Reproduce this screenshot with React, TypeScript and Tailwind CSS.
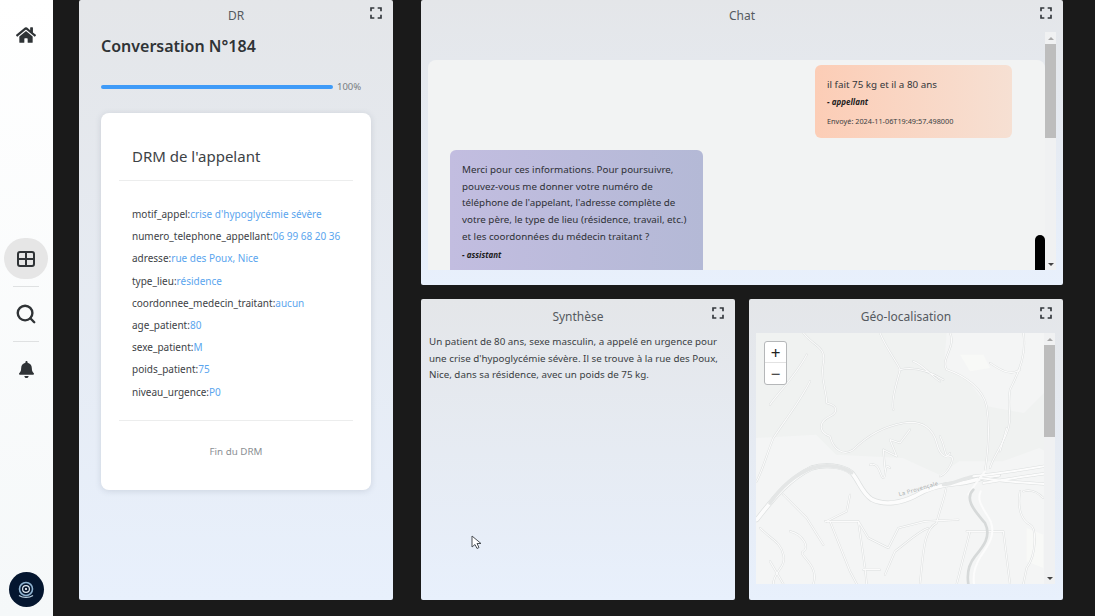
import React from 'react';
import { FaHome, FaBell } from 'react-icons/fa';
import { MdFullscreen } from 'react-icons/md';
import { Search } from 'lucide-react';

const drm = [
  { key: 'motif_appel', value: "crise d'hypoglycémie sévère" },
  { key: 'numero_telephone_appellant', value: '06 99 68 20 36' },
  { key: 'adresse', value: 'rue des Poux, Nice' },
  { key: 'type_lieu', value: 'résidence' },
  { key: 'coordonnee_medecin_traitant', value: 'aucun' },
  { key: 'age_patient', value: '80' },
  { key: 'sexe_patient', value: 'M' },
  { key: 'poids_patient', value: '75' },
  { key: 'niveau_urgence', value: 'P0' },
];

// small map roads, drawn twice: grey casing then white fill
const minorRoads = [
  'M190 115c30 40 70 40 60 90s10 80 10 120c40 10 30 30 10 40-40 20-30 50 0 60 10 40 40 60 70 40 40-40 90-70 150-80 60-10 90 20 100 60s30 50 40 30',
  'M420 115c20 50 60 100 60 110s-30 90-20 120',
  'M630 115c20 40-30 80-10 110 60 20 110 60 120 110 10 60 5 130-5 195',
  'M850 115c10 60-10 110-40 170-10 60 10 80-10 130s-40 70-50 105',
  'M200 180c-30 60-90 120-110 150M210 260c-30 60-70 110-110 170-20 50-30 90-50 130',
  'M520 200c30 10 60 50 80 60M750 205c30 20 60 40 90 20M480 225c40-10 80 0 130 30',
  'M510 405l-30 40-30-10 20 50-40-20 5 60M600 425c20 40 10 60 30 60s-5 50-30 60',
  'M390 510c30-10 30 40 40 40s0-50 20-30M850 590c30-10 50 10 60 20M840 590c-10 60 10 90 30 100s20 90-10 130l-10 48',
  'M60 700c40 40 60 40 70 80s-30 50-30 88M150 710c40 10 60 50 40 60s50 40 30 98',
  'M255 680h100l30 50 60 30 30-60 80-20 100-5M270 680l60 150 20 38M355 680l20 140 5 48M370 825h50',
  'M590 685c-40 20-40 90-50 183M680 710h110l20 158M650 868l40-158M435 840l30-70c40-30 70-60 100-70M620 570c-5 40-20 70-30 115',
  'M130 600l70 70 50 80M330 600l-10 50-60 30M800 400l-20 70M90 800l40 68',
];

function Panel({ title, className, head = 'h-[32px] pt-[7px]', icon = 'top-[3px]', children }: { title: string; className: string; head?: string; icon?: string; children?: React.ReactNode }) {
  return (
    <section className={`relative flex flex-col overflow-hidden rounded-[2px] bg-gradient-to-b from-[#e4e6e9] to-[#e8f0fc] ${className}`}>
      <div className={`shrink-0 text-center text-[12px] leading-[17px] text-[#555a60] ${head}`}>{title}</div>
      <MdFullscreen className={`absolute right-[7px] text-[#33383d] ${icon}`} size={20} />
      {children}
    </section>
  );
}

function Scrollbar({ thumb }: { thumb: string }) {
  return (
    <div className="flex w-[11px] shrink-0 flex-col items-center bg-[#f0f1f2]">
      <div className="flex h-[12px] items-center justify-center">
        <div className="h-0 w-0 border-x-[3px] border-b-[3px] border-x-transparent border-b-[#a8a8a8]" />
      </div>
      <div className={`w-full bg-[#bdbdbd] ${thumb}`} />
      <div className="flex-1" />
      <div className="flex h-[12px] items-center justify-center">
        <div className="h-0 w-0 border-x-[3px] border-t-[3px] border-x-transparent border-t-[#444444]" />
      </div>
    </div>
  );
}

function GridIcon() {
  return (
    <svg width="18" height="16" viewBox="0 0 18 16" fill="none" stroke="#2f3336" strokeWidth="2">
      <rect x="1" y="1" width="16" height="14" rx="2" />
      <path d="M9 1v14M1 8h16" />
    </svg>
  );
}

function Logo() {
  return (
    <div className="flex h-[35px] w-[35px] items-center justify-center rounded-full bg-[#04162f]">
      <svg width="20" height="20" viewBox="0 0 20 20" fill="none">
        <circle cx="10" cy="9" r="6.5" stroke="#8fb4d2" strokeWidth="1.6" />
        <circle cx="10" cy="9" r="3.4" stroke="#dfe9f2" strokeWidth="1.2" />
        <circle cx="10" cy="9" r="1.1" fill="#ffffff" />
        <path d="M3 15.5c4 2.6 10 2.6 14 0" stroke="#b9cfe0" strokeWidth="1.3" />
      </svg>
    </div>
  );
}

function Sidebar() {
  return (
    <aside className="flex h-full w-[53px] shrink-0 flex-col items-center bg-gradient-to-b from-[#ffffff] to-[#f5f8f9] pt-[25px] pr-[1px] pb-[9px]">
      <FaHome size={20} className="text-[#2f3336]" />
      <div className="mt-[193px] flex h-[41px] w-[44px] items-center justify-center rounded-full bg-[#e6e6e6]">
        <GridIcon />
      </div>
      <div className="mt-[7px] h-px w-[26px] bg-[#dfe1e2]" />
      <Search size={22} strokeWidth={2.6} className="mt-[16px] text-[#2f3336]" />
      <div className="mt-[16px] h-px w-[26px] bg-[#dfe1e2]" />
      <FaBell size={17} className="mt-[19px] text-[#2f3336]" />
      <div className="mt-auto">
        <Logo />
      </div>
    </aside>
  );
}

function DrPanel() {
  return (
    <Panel title="DR" className="h-[600px] w-[314px] shrink-0">
      <div className="px-[22px]">
        <h1 className="text-[16px] leading-[28px] font-semibold text-[#2f3336]">Conversation N°184</h1>
        <div className="mt-[20px] flex items-center">
          <div className="h-[4px] w-[232px] rounded-full bg-[#3f9bf8]" />
          <span className="ml-[4px] text-[9.5px] leading-[14px] text-[#777c80]">100%</span>
        </div>
        <div className="mt-[19px] h-[377px] w-[270px] rounded-[8px] bg-white pt-[31px] shadow-[0_1px_6px_rgba(80,90,110,0.18)]">
          <div className="mx-[18px] border-b border-[#eceded] px-[13px] pb-[12px] text-[15px] leading-[24px] text-[#3d4246]">
            DRM de l'appelant
          </div>
          <div className="mx-[18px] flex flex-col border-b border-[#eceded] px-[13px] pt-[22px] pb-[17px]">
            {drm.map((row) => (
              <div key={row.key} className="h-[22.2px] text-[10px] leading-[22px] whitespace-nowrap text-[#3d4246]">
                {row.key}:<span className="text-[#5aa5ee]">{row.value}</span>
              </div>
            ))}
          </div>
          <div className="pt-[23px] text-center text-[9.8px] leading-[16px] text-[#8b8f93]">Fin du DRM</div>
        </div>
      </div>
    </Panel>
  );
}

function ChatPanel() {
  return (
    <Panel title="Chat" className="h-[285px] w-[642px]">
      <div className="ml-[7px] flex h-[238px] w-[628px]">
        <div className="relative flex-1 overflow-hidden pt-[28px]">
          <div className="h-full rounded-t-[8px] bg-[#f2f3f3] pt-[5px]">
            <div className="ml-[387px] h-[73px] w-[197px] rounded-[6px] bg-gradient-to-r from-[#fccdb6] to-[#f6e0d3] px-[12px] pt-[12px]">
              <p className="text-[9.8px] leading-[16px] text-[#33363a]">il fait 75 kg et il a 80 ans</p>
              <p className="mt-[3px] text-[8px] leading-[12px] font-bold text-[#1d1d1d] italic">- appellant</p>
              <p className="mt-[7px] text-[7.3px] leading-[12px] text-[#3b3e42]">Envoyé: 2024-11-06T19:49:57.498000</p>
            </div>
            <div className="mt-[12px] ml-[22px] h-[140px] w-[253px] rounded-[6px] bg-gradient-to-r from-[#c2bde0] to-[#b4b9d6] px-[12px] pt-[12px]">
              <p className="text-[9.8px] leading-[16.7px] text-[#2e3036]">
                Merci pour ces informations. Pour poursuivre, pouvez-vous me donner votre numéro de téléphone de l'appelant, l'adresse complète de votre père, le type de lieu (résidence, travail, etc.) et les coordonnées du médecin traitant ?
              </p>
              <p className="mt-[3px] text-[8px] leading-[12px] font-bold text-[#1d1d1d] italic">- assistant</p>
            </div>
          </div>
          <div className="absolute right-0 bottom-0 h-[35px] w-[10px] rounded-t-full bg-black" />
        </div>
        <Scrollbar thumb="h-[94px]" />
      </div>
    </Panel>
  );
}

function SyntheseCursor() {
  return (
    <svg className="absolute left-[50px] top-[236px]" width="11" height="15" viewBox="0 0 11 15" fill="#ffffff" stroke="#4a4f55" strokeWidth="1">
      <path d="M1 1v11l3-2.5 2 4 2-1-2-4h4z" />
    </svg>
  );
}

function MapArt() {
  return (
    <svg className="h-full w-full" viewBox="48 115 864 753" preserveAspectRatio="none" fill="none" strokeLinecap="round" strokeLinejoin="round">
      <rect x="48" y="115" width="864" height="753" fill="#f0f2f1" />
      <path d="M620 115h292v180l-60 60-110-20-60-80-70-40zM48 430l180-10 60 60 200 10 110 50 60-40 130 0 110-40 74 40v408H48z" fill="#f4f5f5" />
      <path d="M860 700l50 20v100l-50-20zM660 180h70l20 40-60 10z" fill="#f8f9f7" />
      <g stroke="#dadddd" strokeWidth="6">
        {minorRoads.map((d) => <path key={d} d={d} />)}
      </g>
      <g stroke="#fbfbfb" strokeWidth="3.5">
        {minorRoads.map((d) => <path key={d} d={d} />)}
      </g>
      <path d="M50 675c40-50 90-120 165-155 40-12 90-8 120 14 25 30 30 60 60 80 40 20 90 10 130-10 40-25 90-35 130-38 40-2 70-20 120-25" stroke="#dcdfdf" strokeWidth="15" />
      <path d="M50 675c40-50 90-120 165-155 40-12 90-8 120 14 25 30 30 60 60 80 40 20 90 10 130-10 40-25 90-35 130-38 40-2 70-20 120-25" stroke="#fcfcfc" strokeWidth="11" />
      <path d="M90 625c35-50 75-85 125-105 40-12 90-8 120 14" stroke="#e4e6e6" strokeWidth="11" />
      <path d="M610 570c30-2 60-20 90-25" stroke="#e4e6e6" strokeWidth="10" />
      <path d="M700 545c70-8 140-18 212-30M730 565c60-10 120-20 182-28M720 550c70 10 130 15 192 18" stroke="#dcdfdf" strokeWidth="9" />
      <path d="M700 545c70-8 140-18 212-30M730 565c60-10 120-20 182-28M720 550c70 10 130 15 192 18" stroke="#fcfcfc" strokeWidth="6" />
      <path d="M735 530l-30 40-20 30" stroke="#fbfbfb" strokeWidth="6" />
      <path d="M700 585c-30 30 10 70 35 100 20 40-5 70-30 100-20 25-25 50-20 83" stroke="#d6d9d9" strokeWidth="8" />
      <path d="M722 590c-15 30 15 60 30 90 15 40-5 70-30 105-15 25-25 50-20 83" stroke="#fcfcfc" strokeWidth="6" />
      <text x="478" y="605" transform="rotate(-16 478 605)" fontFamily="'Noto Sans', sans-serif" fontSize="17" letterSpacing="1" fill="#a9adad">La Provençale</text>
    </svg>
  );
}

function GeoPanel() {
  return (
    <Panel title="Géo-localisation" className="h-full w-[314px]" head="h-[34px] pt-[9px]" icon="top-[4px]">
      <div className="ml-[7px] flex h-[251px] w-[299px]">
        <div className="relative w-[288px] overflow-hidden">
          <MapArt />
          <div className="absolute left-[8px] top-[8px] w-[23px] overflow-hidden rounded-[3px] border border-[#b5b7b9] bg-white">
            <div className="flex h-[21px] items-center justify-center border-b border-[#e2e2e2] text-[17px] leading-none text-[#222222]">+</div>
            <div className="flex h-[21px] items-center justify-center text-[17px] leading-none text-[#222222]">−</div>
          </div>
        </div>
        <Scrollbar thumb="h-[92px]" />
      </div>
    </Panel>
  );
}

export default function App() {
  return (
    <div className="flex h-[616px] w-[1095px] overflow-hidden bg-[#1a1a1a] font-['Noto_Sans',sans-serif]">
      <Sidebar />
      <main className="ml-[26px] flex gap-[28px]">
        <DrPanel />
        <div className="flex h-[600px] w-[642px] flex-col gap-[14px]">
          <ChatPanel />
          <div className="flex min-h-0 flex-1 gap-[14px]">
            <Panel title="Synthèse" className="h-full w-[314px]" head="h-[34px] pt-[9px]" icon="top-[4px]">
              <p className="px-[8px] pt-[1px] text-[9.8px] leading-[16.7px] text-[#3a3e43]">
                Un patient de 80 ans, sexe masculin, a appelé en urgence pour une crise d'hypoglycémie sévère. Il se trouve à la rue des Poux, Nice, dans sa résidence, avec un poids de 75 kg.
              </p>
              <SyntheseCursor />
            </Panel>
            <GeoPanel />
          </div>
        </div>
      </main>
    </div>
  );
}
